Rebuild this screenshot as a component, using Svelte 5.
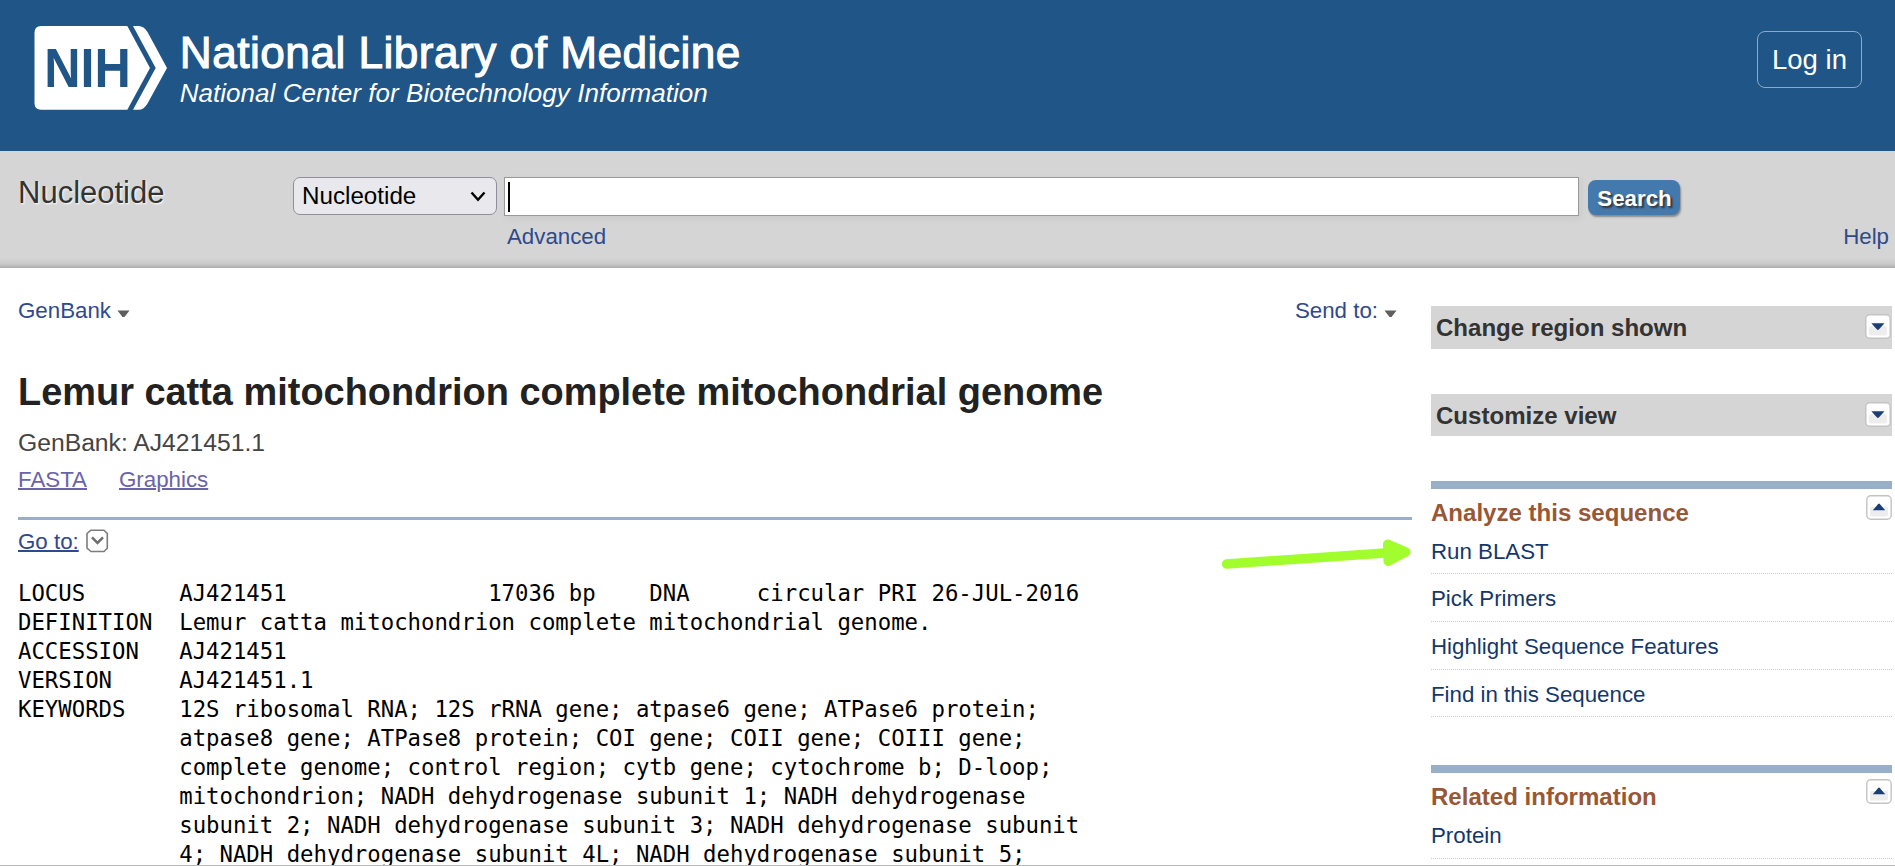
<script>
  const panels = [
    { title: 'Change region shown', height: 43 },
    { title: 'Customize view', height: 42 },
  ];
  const sections = [
    {
      title: 'Analyze this sequence',
      links: ['Run BLAST', 'Pick Primers', 'Highlight Sequence Features', 'Find in this Sequence'],
    },
    { title: 'Related information', links: ['Protein'] },
  ];
  const record = [
    'LOCUS       AJ421451               17036 bp    DNA     circular PRI 26-JUL-2016',
    'DEFINITION  Lemur catta mitochondrion complete mitochondrial genome.',
    'ACCESSION   AJ421451',
    'VERSION     AJ421451.1',
    'KEYWORDS    12S ribosomal RNA; 12S rRNA gene; atpase6 gene; ATPase6 protein;',
    '            atpase8 gene; ATPase8 protein; COI gene; COII gene; COIII gene;',
    '            complete genome; control region; cytb gene; cytochrome b; D-loop;',
    '            mitochondrion; NADH dehydrogenase subunit 1; NADH dehydrogenase',
    '            subunit 2; NADH dehydrogenase subunit 3; NADH dehydrogenase subunit',
    '            4; NADH dehydrogenase subunit 4L; NADH dehydrogenase subunit 5;',
  ].join('\n');
</script>

{#snippet caret()}
  <svg class="caret" width="13" height="8" viewBox="0 0 13 8"><path d="M.5.5h12l-5 6.5h-2z" fill="#5e5e5e" /></svg>
{/snippet}

{#snippet toggle(up)}
  <svg class="toggle" width="26" height="25" viewBox="0 0 26 25">
    <rect x=".8" y=".8" width="24.4" height="23.4" rx="4" fill="#fff" stroke="#c3c3c3" stroke-width="1.4" />
    <rect x="4" y="12" width="18" height="9.5" rx="2" fill="#ededee" />
    {#if up}
      <path d="M6.8 15.3L12.2 9q.8-.9 1.600 0l5.400 6.300z" fill="#1b3d75" />
    {:else}
      <path d="M6.300 9.200h13.200l-5.700 6.400q-.9.9-1.800 0z" fill="#1b3d75" />
    {/if}
  </svg>
{/snippet}

<div class="page">
  <header>
    <svg class="logo" width="720" height="100" viewBox="30 20 720 100">
      <path d="M41 26H127.300L150 68L127.300 109.800H41Q34.500 109.800 34.500 103V33Q34.500 26 41 26Z" fill="#fff" />
      <path d="M133 26H138.500Q144 26 147.500 32L167 68L147.500 103.500Q144 109.800 138.500 109.800H133L155.700 68Z" fill="#fff" />
      <text x="44.300" y="87" class="nih" textLength="86.500" lengthAdjust="spacingAndGlyphs">NIH</text>
      <text x="179.800" y="68" class="org" textLength="560.500">National Library of Medicine</text>
      <text x="179.700" y="101.500" class="center" textLength="528">National Center for Biotechnology Information</text>
    </svg>
    <button class="login">Log in</button>
  </header>

  <div class="searchbar">
    <div class="db">Nucleotide</div>
    <div class="select">
      <span>Nucleotide</span>
      <svg width="16" height="11" viewBox="0 0 16 11"><path d="M1.500 1.500L8 8.700L14.500 1.500" fill="none" stroke="#000" stroke-width="2.400" /></svg>
    </div>
    <div class="query">
      <div class="field"><i></i></div>
      <a>Advanced</a>
    </div>
    <button class="go">Search</button>
    <a class="help">Help</a>
  </div>

  <div class="body">
    <main>
      <div class="formats">
        <a>GenBank{@render caret()}</a>
        <a class="send">Send to:{@render caret()}</a>
      </div>
      <h1>Lemur catta mitochondrion complete mitochondrial genome</h1>
      <p class="accession">GenBank: AJ421451.1</p>
      <div class="views"><a>FASTA</a><a>Graphics</a></div>
      <div class="goto">
        <a>Go to:</a>
        <svg width="23" height="24" viewBox="0 0 23 24">
          <path d="M5 1.200H18L21.300 4.500V19.200L18 22.500H5L1 19.200V4.500Z" fill="#fff" stroke="#7c7c7c" stroke-width="1.600" stroke-linejoin="round" />
          <path d="M6 8.300L11.500 13.800L17 8.300" fill="none" stroke="#707070" stroke-width="2.600" />
        </svg>
      </div>
      <pre>{record}</pre>
    </main>

    <aside>
      {#each panels as panel}
        <div class="panel" style="height: {panel.height}px"><span>{panel.title}</span>{@render toggle(false)}</div>
      {/each}
      {#each sections as section}
        <section>
          <h2><span>{section.title}</span>{@render toggle(true)}</h2>
          <ul>
            {#each section.links as link}<li>{link}</li>{/each}
          </ul>
        </section>
      {/each}
    </aside>
  </div>

  <svg class="arrow" width="196" height="34" viewBox="1220 538 196 34">
    <path d="M1226.500 564L1392 552.500" stroke="#a1fd2c" stroke-width="9.500" stroke-linecap="round" />
    <path d="M1387.500 544L1406 552L1388 561.500Z" fill="#a1fd2c" stroke="#a1fd2c" stroke-width="9" stroke-linejoin="round" />
  </svg>
</div>

<style>
  .page {
    position: relative;
    box-sizing: border-box;
    width: 100%;
    height: 866px;
    overflow: hidden;
    border-bottom: 1px solid #b9b9b9;
    background: #fff;
    font-family: 'Liberation Sans', Arial, sans-serif;
    font-size: 22.3px;
    line-height: 28px;
  }
  header {
    display: flex;
    justify-content: space-between;
    align-items: flex-start;
    box-sizing: border-box;
    height: 151px;
    padding: 20px 33px 0 30px;
    background: #205588;
  }
  .nih { font-size: 54.8px; font-weight: 700; fill: #205588; }
  .org { font-size: 44.2px; fill: #fff; stroke: #fff; stroke-width: 1.1px; }
  .center { font-size: 26px; font-style: italic; fill: #fff; }
  button { border: 0; padding: 0; font-family: inherit; }
  .login {
    width: 105px;
    height: 57px;
    margin-top: 11px;
    border: 1px solid #8faac4;
    border-radius: 8px;
    background: none;
    color: #fff;
    font-size: 27.5px;
  }
  .searchbar {
    display: flex;
    align-items: flex-start;
    box-sizing: border-box;
    height: 117px;
    padding: 26px 6px 0 18px;
    background: linear-gradient(#d5d5d5 calc(100% - 10px), #c9c9c9 calc(100% - 4px), #acacac);
  }
  .db {
    width: 275px;
    padding-top: 1px;
    color: #333;
    font-size: 31px;
    line-height: 30px;
    text-shadow: 1px 1px 2px #fff;
  }
  .select {
    display: flex;
    justify-content: space-between;
    align-items: center;
    box-sizing: border-box;
    width: 204px;
    height: 38px;
    padding: 0 10px 0 8px;
    border: 1px solid #8f8f9d;
    border-radius: 7px;
    background: #e9e9ed;
    font-size: 24.2px;
    line-height: 36px;
  }
  .query { width: 1075px; margin-left: 7px; }
  .field {
    box-sizing: border-box;
    height: 39px;
    padding: 4px 0 0 3px;
    border: 1px solid #999;
    background: #fff;
    box-shadow: 2px 3px 8px rgba(0, 0, 0, 0.05);
  }
  .field i { display: block; width: 2px; height: 30px; background: #000; }
  a { color: #2f4a8b; }
  .query a { display: block; margin: 7px 0 0 3px; }
  .go {
    box-sizing: border-box;
    width: 92px;
    height: 35px;
    margin: 3px 0 0 9px;
    padding: 2px 0 0 1px;
    border-radius: 8px;
    background: #4479ae;
    box-shadow: 1px 2px 2px #888;
    color: #fff;
    font-size: 22.3px;
    font-weight: 700;
    text-shadow: 2px 2px 2px #333;
  }
  .help { margin: 46px 0 0 auto; }
  .body { display: flex; gap: 19px; padding-left: 18px; }
  main { width: 1394px; padding-top: 29px; }
  .formats { display: flex; justify-content: space-between; }
  .caret { margin-left: 6px; }
  .send { margin-right: 15px; }
  h1 { margin: 45px 0 0; color: #222; font-size: 37.93px; line-height: 44px; }
  .accession { margin: 15px 0 0; color: #444; font-size: 24.7px; }
  .views { display: flex; gap: 32px; margin-top: 9px; }
  .views a { color: #6a63a9; }
  .views a, .goto a {
    text-decoration: underline;
    text-decoration-thickness: 2px;
    text-underline-offset: 1px;
  }
  .goto {
    display: flex;
    gap: 7px;
    margin-top: 23px;
    padding-top: 8px;
    border-top: 3px solid #97b0c8;
  }
  .goto svg { margin-top: 1px; }
  pre {
    margin: 23px 0 0;
    color: #000;
    font-family: 'DejaVu Sans Mono', monospace;
    font-size: 22.32px;
    line-height: 29px;
  }
  aside { width: 461px; padding-top: 38px; }
  .panel {
    display: flex;
    justify-content: space-between;
    margin-bottom: 45px;
    padding: 0 1px 0 5px;
    box-sizing: border-box;
    background: #d5d5d5;
    color: #333;
    font-size: 24.05px;
    font-weight: 700;
    line-height: 43px;
  }
  .panel .toggle { margin-top: 8px; }
  section { margin-bottom: 48px; border-top: 8px solid #97b0c8; }
  h2 {
    display: flex;
    justify-content: space-between;
    height: 40px;
    margin: 0;
    color: #985735;
    font-size: 24.05px;
    line-height: 32px;
  }
  h2 span { padding-top: 8px; }
  h2 .toggle { margin-top: 6px; }
  ul { margin: 0; padding: 0; list-style: none; }
  li { padding: 11px 0 8px; border-bottom: 1px dotted #ccc; color: #14376c; }
  li:first-child { padding: 9px 0 7px; }
  li:last-child { padding-bottom: 7px; }
  li:only-child { padding-bottom: 8px; }
  .arrow { position: absolute; left: 1220px; top: 538px; }
</style>
